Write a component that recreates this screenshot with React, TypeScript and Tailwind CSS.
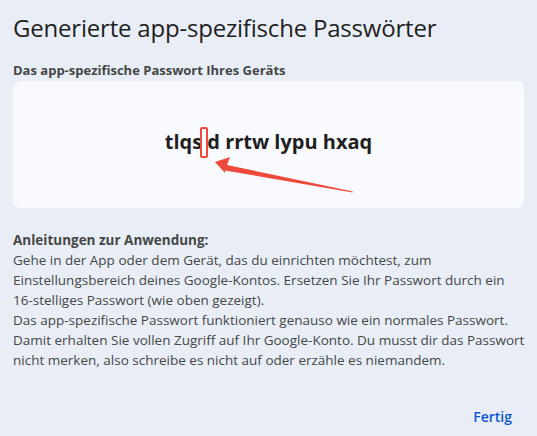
import React from "react";

const lines = [
  "Gehe in der App oder dem Gerät, das du einrichten möchtest, zum",
  "Einstellungsbereich deines Google-Kontos. Ersetzen Sie Ihr Passwort durch ein",
  "16-stelliges Passwort (wie oben gezeigt).",
  "Das app-spezifische Passwort funktioniert genauso wie ein normales Passwort.",
  "Damit erhalten Sie vollen Zugriff auf Ihr Google-Konto. Du musst dir das Passwort",
  "nicht merken, also schreibe es nicht auf oder erzähle es niemandem.",
];

const App: React.FC = () => {
  return (
    <div
      className="w-[537px] h-[436px] bg-[#e9eef6] px-[13px] pt-[12px] flex flex-col"
      style={{ fontFamily: '"Open Sans", "Noto Sans", sans-serif' }}
    >
      {/* Title */}
      <h1 className="text-[24px] leading-[32px] text-[#1f1f1f] tracking-[-0.2px]">
        Generierte app-spezifische Passwörter
      </h1>

      {/* Password card */}
      <div className="mt-[18px] text-[13px] leading-[16px] font-bold text-[#444746]">
        Das app-spezifische Passwort Ihres Geräts
      </div>
      <div className="relative mt-[3px] h-[127px] rounded-lg bg-[#f8fafd] flex items-center justify-center pb-[6px]">
        <span className="text-[20px] font-bold text-[#1f1f1f]">
          tlqs d rrtw lypu hxaq
        </span>

        {/* annotation */}
        <div className="absolute left-[187px] top-[46px] w-[8px] h-[31px] rounded-[2px] border-2 border-[#ee4a3c]" />
        <svg
          className="absolute left-0 top-0"
          width="512"
          height="127"
          viewBox="0 0 512 127"
        >
          <path
            d="M202 81 L217 76 L214 84 L340 110.5 L339.6 111.5 L212 89.5 L212 92 Z"
            fill="#ee4a3c"
          />
        </svg>
      </div>

      {/* Instructions */}
      <div className="mt-[22px] text-[13.5px] leading-[20px] text-[#444746]">
        <div className="font-bold">Anleitungen zur Anwendung:</div>
        {lines.map((line) => (
          <div key={line} className="whitespace-nowrap">
            {line}
          </div>
        ))}
      </div>

      <div className="mt-auto mb-[3px] flex justify-end pr-[10px]">
        <button className="text-[14px] font-semibold text-[#0b57d0] px-[2px] py-[6px]">
          Fertig
        </button>
      </div>
    </div>
  );
};

export default App;
